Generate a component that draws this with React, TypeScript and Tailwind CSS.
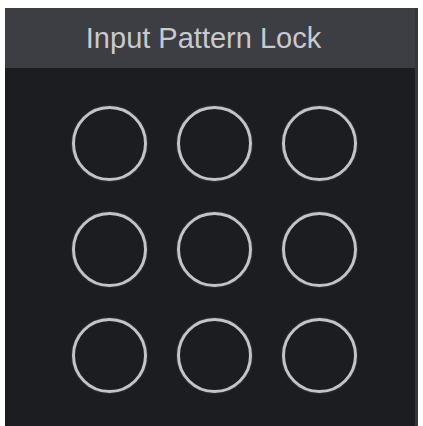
const dots = [0, 1, 2, 3, 4, 5, 6, 7, 8];

function Dot() {
  return <div className="size-[75px] rounded-full border-[3px] border-[#c3c4c6] shadow-[0_0_2px_rgba(200,200,200,0.35)]" />;
}

export default function App() {
  return (
    <div className="w-[423px] h-[426px] bg-white pt-[8px] pl-[5px]">
      <div className="w-[413px] h-[418px] flex flex-col bg-[#1b1d21] border-r-[3px] border-[#34373b]">
        <div className="h-[60px] bg-[#3c3e43] flex items-center justify-center pr-[13px] shrink-0">
          <p className="font-['Liberation_Sans',Arial,sans-serif] text-[29px] leading-none text-[#c9cacd]">Input Pattern Lock</p>
        </div>
        <div className="grid grid-cols-[repeat(3,75px)] gap-x-[30px] gap-y-[31px] pl-[67px] pt-[38px]">
          {dots.map((d) => (
            <Dot key={d} />
          ))}
        </div>
      </div>
    </div>
  );
}
